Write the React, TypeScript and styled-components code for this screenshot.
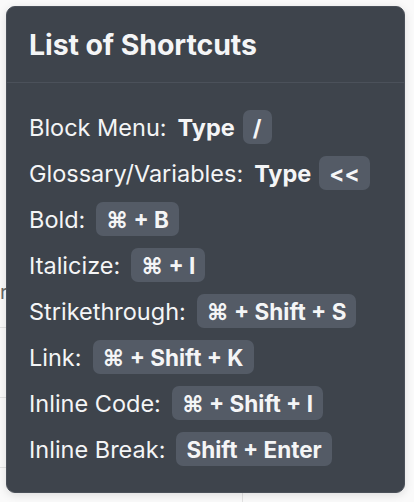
import React from 'react';
import styled, { createGlobalStyle } from 'styled-components';

const GlobalStyle = createGlobalStyle`
  html, body {
    margin: 0;
    padding: 0;
    background: #f8f8f8;
  }
  body {
    font-family: Inter, "Noto Sans", "Liberation Sans", sans-serif;
    -webkit-font-smoothing: antialiased;
  }
`;

interface Shortcut {
  label: string;
  prefix?: string;
  keys: string;
}

const shortcuts: Shortcut[] = [
  { label: 'Block Menu:', prefix: 'Type', keys: '/' },
  { label: 'Glossary/Variables:', prefix: 'Type', keys: '<<' },
  { label: 'Bold:', keys: '⌘ + B' },
  { label: 'Italicize:', keys: '⌘ + I' },
  { label: 'Strikethrough:', keys: '⌘ + Shift + S' },
  { label: 'Link:', keys: '⌘ + Shift + K' },
  { label: 'Inline Code:', keys: '⌘ + Shift + I' },
  { label: 'Inline Break:', keys: 'Shift + Enter' },
];

const App: React.FC = () => (
  <>
    <GlobalStyle />
    <Page>
      <Backdrop>
        <Rule $top={327} />
        <Rule $top={397} />
        <Rule $top={467} />
        <Faint>r!</Faint>
      </Backdrop>
      <Card>
        <Header>
          <Title>List of Shortcuts</Title>
        </Header>
        <List>
          {shortcuts.map((s) => (
            <Row key={s.label}>
              <Label>{s.label}</Label>
              {s.prefix && <Prefix>{s.prefix}</Prefix>}
              <Kbd>{s.keys}</Kbd>
            </Row>
          ))}
        </List>
      </Card>
    </Page>
  </>
);

const Page = styled.div`
  position: relative;
  width: 414px;
  height: 502px;
  overflow: hidden;
  background: #fafafa;
`;

const Backdrop = styled.div`
  position: absolute;
  inset: 0;
  &::after {
    content: '';
    position: absolute;
    left: 242px;
    top: 480px;
    height: 30px;
    border-left: 1px solid #e2e2e2;
  }
`;

const Rule = styled.div<{ $top: number }>`
  position: absolute;
  left: 0;
  top: ${(p) => p.$top}px;
  width: 40px;
  border-top: 1px solid #e4e4e4;
`;

const Faint = styled.span`
  position: absolute;
  left: 0;
  top: 280px;
  font-size: 20px;
  letter-spacing: 4px;
  color: #666;
`;

const Card = styled.div`
  position: absolute;
  left: 6px;
  top: 6px;
  width: 399px;
  height: 487px;
  box-sizing: border-box;
  background: #3e444c;
  border: 1px solid #4a5059;
  border-radius: 9px;
  box-shadow: 0 2px 10px rgba(0, 0, 0, 0.12);
  color: #f4f5f6;
  display: flex;
  flex-direction: column;
`;

const Header = styled.div`
  height: 79px;
  display: flex;
  align-items: center;
  padding: 0 22px;
  border-bottom: 1px solid #4b515a;
`;

const Title = styled.h1`
  margin: 0;
  font-size: 28.5px;
  font-weight: 700;
  letter-spacing: -0.1px;
`;

const List = styled.div`
  display: flex;
  flex-direction: column;
  gap: 12px;
  padding: 27px 22px 26px;
`;

const Row = styled.div`
  display: flex;
  align-items: center;
  height: 34px;
  font-size: 23.5px;
`;

const Label = styled.span`
  font-weight: 400;
  margin-right: 11px;
`;

const Prefix = styled.span`
  font-weight: 700;
  margin-right: 8px;
`;

const Kbd = styled.span`
  display: inline-flex;
  align-items: center;
  height: 34px;
  padding: 0 10px;
  border-radius: 7px;
  background: #545b66;
  font-weight: 700;
  font-size: 22.5px;
  white-space: pre;
`;

export default App;
